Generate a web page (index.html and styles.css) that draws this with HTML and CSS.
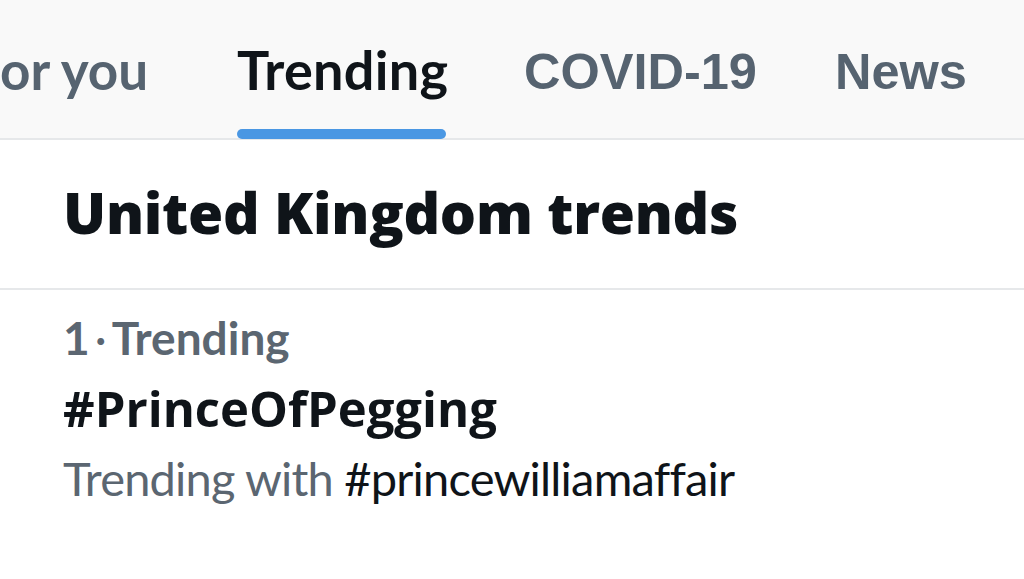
FILE: index.html
```html
<!DOCTYPE html>
<html>
<head>
<meta charset="utf-8">
<link rel="stylesheet" href="styles.css">
</head>
<body>
<nav class="tabs">
  <div class="tab tab-foryou"><span class="tab-label">or you</span></div>
  <div class="tab tab-active"><span class="tab-label">Trending</span><span class="tab-bar"></span></div>
  <div class="tab tab-covid"><span class="tab-label alt">COVID-19</span></div>
  <div class="tab tab-news"><span class="tab-label alt">News</span></div>
</nav>
<section class="section-head">
  <h1 class="title">United Kingdom trends</h1>
</section>
<section class="trend">
  <div class="trend-meta">1<span class="dot">·</span>Trending</div>
  <div class="trend-name">#PrinceOfPegging</div>
  <div class="trend-with"><span class="muted">Trending with</span> #princewilliamaffair</div>
</section>
</body>
</html>
```
FILE: styles.css
```css
html, body {
  margin: 0;
  padding: 0;
  background: #ffffff;
  width: 1024px;
  height: 579px;
  overflow: hidden;
}
body {
  font-family: "Lato", "Liberation Sans", sans-serif;
  color: #111418;
}
.tabs {
  display: flex;
  align-items: stretch;
  height: 140px;
  background: #f9f9f9;
  border-bottom: 2px solid #e6e8ea;
  box-sizing: border-box;
}
.tab {
  position: relative;
  display: flex;
  align-items: flex-start;
  padding-top: 39px;
  box-sizing: border-box;
}
.tab-label {
  font-family: "Lato", sans-serif;
  font-weight: 700;
  font-size: 53px;
  line-height: 62px;
  color: #566370;
  white-space: nowrap;
}
.tab-active .tab-label { font-size: 54px; letter-spacing: 0.3px; }
.tab-label.alt {
  font-family: "Liberation Sans", "Arial", sans-serif;
  font-size: 50.5px;
  padding-top: 2px;
}
.tab-foryou { width: 237px; }
.tab-active { width: 287px; }
.tab-active .tab-label { color: #0f1419; }
.tab-covid { width: 311px; }
.tab-bar {
  position: absolute;
  left: 0;
  top: 129px;
  width: 209px;
  height: 10px;
  border-radius: 5px;
  background: #4a97e3;
}
.section-head {
  height: 150px;
  border-bottom: 2px solid #e6e8ea;
  box-sizing: border-box;
  padding: 0 0 0 63px;
  display: flex;
  align-items: center;
}
.title {
  margin: 0;
  font-family: "Open Sans", sans-serif;
  font-weight: 800;
  font-size: 57px;
  letter-spacing: -0.25px;
  line-height: 70px;
  color: #0f1419;
  margin-top: -5px;
}
.trend {
  padding: 20px 0 0 63px;
}
.trend-meta {
  font-family: "Lato", sans-serif;
  font-weight: 700;
  font-size: 46px;
  line-height: 56px;
  color: #5b6671;
}
.dot { padding: 0 5px; font-weight: 400; }
.trend-name {
  font-family: "Open Sans", sans-serif;
  font-weight: 700;
  font-size: 49px;
  line-height: 68px;
  color: #0f1419;
  margin-top: 8px;
}
.trend-with {
  font-family: "Lato", sans-serif;
  font-weight: 400;
  font-size: 47px;
  letter-spacing: -0.8px;
  line-height: 68px;
  color: #0f1419;
  margin-top: 2px;
}
.muted { color: #5b6671; }
```
